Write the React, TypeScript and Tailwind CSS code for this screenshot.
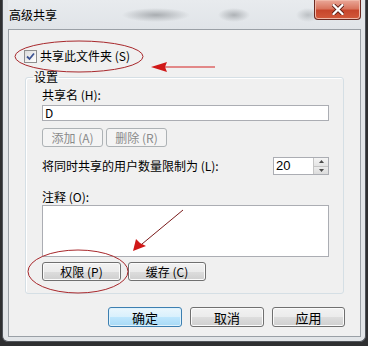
import { FC, ReactNode } from "react";

type BtnKind = "normal" | "default" | "disabled";

const btnStyles: Record<BtnKind, string> = {
  normal:
    "border-[#707070] text-black bg-[linear-gradient(#f2f2f2_0%,#ebebeb_50%,#dddddd_51%,#cfcfcf_100%)] shadow-[inset_0_0_0_1px_#fbfbfb]",
  default:
    "border-[#3c7fb1] text-black bg-[linear-gradient(#eaf6fd_0%,#d9f0fc_50%,#bee6fd_51%,#a7d9f5_100%)] shadow-[inset_0_0_0_1px_#dff2fc]",
  disabled: "border-[#adb2b5] text-[#8a8a8a] bg-[#f4f4f4]",
};

const Btn: FC<{ children: ReactNode; kind?: BtnKind; className?: string }> = ({
  children,
  kind = "normal",
  className = "",
}) => (
  <div
    className={`flex items-center justify-center border rounded-[3px] text-[12px] leading-none ${btnStyles[kind]} ${className}`}
  >
    {children}
  </div>
);

const CheckBox: FC = () => (
  <div className="w-[13px] h-[13px] border border-[#8f8f8f] bg-[linear-gradient(135deg,#dcdcdc,#ffffff)] flex items-center justify-center">
    <svg width="9" height="9" viewBox="0 0 9 9">
      <path d="M1 4.5 L3.5 7 L8 1.5" stroke="#3d5493" strokeWidth="1.8" fill="none" />
    </svg>
  </div>
);

const Spinner: FC = () => (
  <div className="flex w-[56px] h-[18px] border border-[#abadb3] bg-white">
    <div className="flex-1 pl-[2px] text-[13px] leading-[16px] font-['Liberation_Sans',sans-serif]">20</div>
    <div className="w-[15px] flex flex-col border-l border-[#c5c5c5]">
      <div className="flex-1 flex items-center justify-center border-b border-[#c5c5c5] bg-[linear-gradient(#f4f4f4,#e4e4e4)]">
        <svg width="5" height="3" viewBox="0 0 5 3">
          <path d="M0 3 L2.5 0 L5 3 Z" fill="#4a4a4a" />
        </svg>
      </div>
      <div className="flex-1 flex items-center justify-center bg-[linear-gradient(#ececec,#dcdcdc)]">
        <svg width="5" height="3" viewBox="0 0 5 3">
          <path d="M0 0 L2.5 3 L5 0 Z" fill="#4a4a4a" />
        </svg>
      </div>
    </div>
  </div>
);

const Annotations: FC = () => (
  <svg className="absolute left-0 top-0 pointer-events-none" width="368" height="346">
    <ellipse cx="79" cy="56.5" rx="64" ry="15.5" fill="none" stroke="#a8282c" strokeWidth="1" />
    <line x1="215" y1="67" x2="164" y2="67" stroke="#d42020" strokeWidth="1" />
    <path d="M151 67 L167 62 L165 67 L167 72 Z" fill="#d01818" />
    <line x1="183" y1="210" x2="142" y2="244" stroke="#7a1a1a" strokeWidth="1" />
    <path d="M133 251 L136 239 L140 243 L146 246 Z" fill="#d01818" />
    <ellipse cx="78" cy="271.5" rx="50" ry="21.5" fill="none" stroke="#a8282c" strokeWidth="1" />
  </svg>
);

const App: FC = () => {
  return (
    <div className="relative w-[368px] h-[346px] bg-[#2e2f31] overflow-hidden font-['Noto_Sans_CJK_SC',sans-serif] text-black">
      <div className="ml-[2px] w-[364px] h-[342px] flex flex-col border border-[#50545a] border-t-0 rounded-b-[6px] px-[4px] pb-[4px] pl-[5px] bg-[#e2e5e8]">
        {/* title bar */}
        <div className="h-[29px] flex items-start justify-between bg-[radial-gradient(ellipse_34px_7px_at_148px_15px,#a9adb1,transparent),radial-gradient(ellipse_16px_7px_at_226px_15px,#aeb2b6,transparent),radial-gradient(ellipse_12px_7px_at_300px_15px,#bcc0c4,transparent),linear-gradient(#e8ebee,#e0e4e8)]">
          <div className="pt-[8px] pl-[1px] text-[12px] leading-[14px]">高级共享</div>
          <div className="w-[47px] h-[20px] rounded-b-[4px] border border-t-0 border-[#6b2a22] bg-[linear-gradient(#eaa899_0%,#d9765f_45%,#c7462c_55%,#d2593b_100%)] flex items-center justify-center shadow-[inset_0_0_0_1px_#f0b8a8]">
            <svg width="12" height="11" viewBox="0 0 12 11">
              <path d="M1.5 1 L10.5 10 M10.5 1 L1.5 10" stroke="#5a1c14" strokeWidth="4" strokeLinecap="round" />
              <path d="M1.5 1 L10.5 10 M10.5 1 L1.5 10" stroke="#ffffff" strokeWidth="2.4" strokeLinecap="round" />
            </svg>
          </div>
        </div>

        {/* client area */}
        <div className="flex-1 flex flex-col bg-[#f0f0f0] border border-[#9aa0a6]">
          <div className="mt-[19px] ml-[15px] h-[14px] flex items-center gap-[3px]">
            <CheckBox />
            <span className="text-[12px] leading-[14px]">共享此文件夹 (S)</span>
          </div>

          <fieldset className="mt-[6px] ml-[16px] w-[319px] h-[225px] border border-[#d5dfe5] rounded-[3px] shadow-[inset_1px_1px_0_#ffffff]">
            <legend className="ml-[7px] px-[1px] h-[16px] text-[12px] leading-[16px]">设置</legend>
            <div className="flex flex-col pl-[16px]">
              <div className="mt-[3px] h-[14px] text-[12px] leading-[14px]">共享名 (H):</div>
              <div className="mt-[3px] w-[287px] h-[16px] border border-[#abadb3] bg-white pl-[2px] text-[12px] leading-[14px]">
                D
              </div>
              <div className="mt-[7px] flex gap-[3px]">
                <Btn kind="disabled" className="w-[61px] h-[19px]">添加 (A)</Btn>
                <Btn kind="disabled" className="w-[61px] h-[19px]">删除 (R)</Btn>
              </div>
              <div className="mt-[10px] w-[287px] h-[18px] flex items-center justify-between">
                <span className="text-[12px] leading-[14px]">将同时共享的用户数量限制为 (L):</span>
                <Spinner />
              </div>
              <div className="mt-[15px] h-[14px] text-[12px] leading-[14px]">注释 (O):</div>
              <div className="mt-[1px] w-[287px] h-[52px] border border-[#abadb3] bg-white" />
              <div className="mt-[5px] flex gap-[7px]">
                <Btn className="w-[79px] h-[19px]">权限 (P)</Btn>
                <Btn className="w-[78px] h-[19px]">缓存 (C)</Btn>
              </div>
            </div>
          </fieldset>

          <div className="mt-[13px] mr-[15px] flex justify-end gap-[8px]">
            <Btn kind="default" className="w-[74px] h-[20px] text-[13px]">确定</Btn>
            <Btn className="w-[74px] h-[20px] text-[13px]">取消</Btn>
            <Btn className="w-[73px] h-[20px] text-[13px]">应用</Btn>
          </div>
        </div>
      </div>
      <Annotations />
    </div>
  );
};

export default App;
